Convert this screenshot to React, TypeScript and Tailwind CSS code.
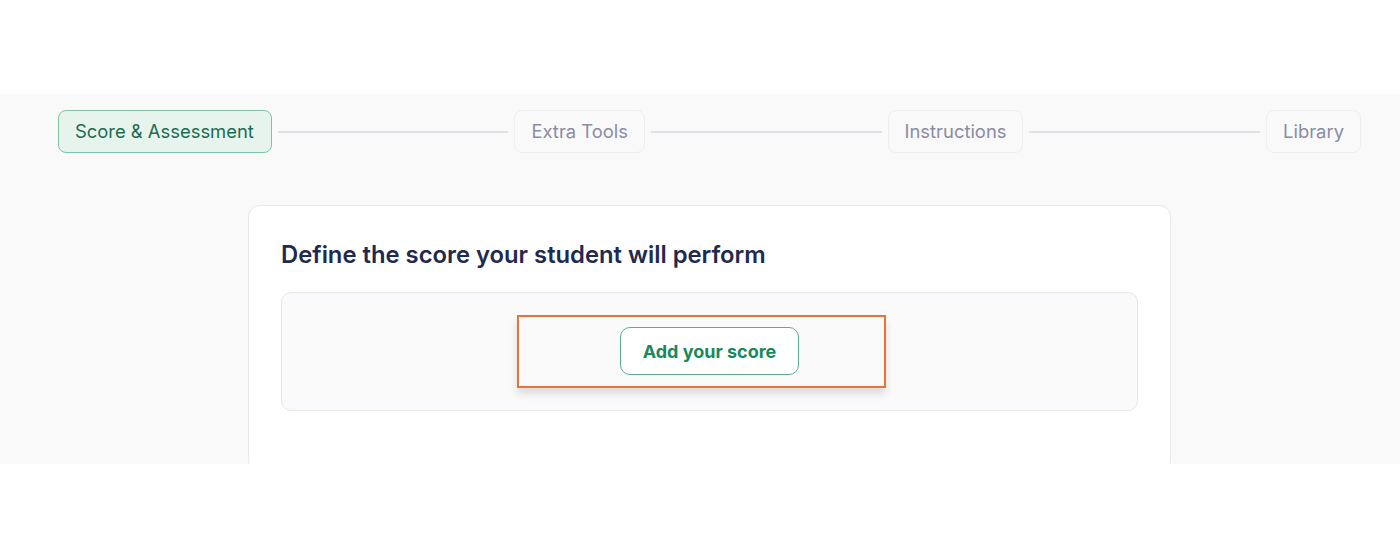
import React from 'react';

const steps = ['Score & Assessment', 'Extra Tools', 'Instructions', 'Library'];

function Stepper({ active }: { active: number }) {
  return (
    <div className="flex items-center">
      {steps.map((label, i) => (
        <React.Fragment key={label}>
          {i > 0 && <div className="mx-[6px] h-[2px] flex-1 bg-[#dfe0e8]" />}
          <div
            className={`flex h-[43px] items-center rounded-[8px] border px-[16px] text-[18.4px] ${
              i === active
                ? 'border-[#7fc3a5] bg-[#e7f4ee] text-[#1f6b50] pr-[17px]'
                : 'border-[#eeeef2] bg-[#f9f9fa] text-[#8a8ca3]'
            }`}
          >
            {label}
          </div>
        </React.Fragment>
      ))}
    </div>
  );
}

export default function App() {
  return (
    <div className="h-[560px] bg-white" style={{ fontFamily: 'Inter, "Noto Sans", sans-serif' }}>
      <div className="h-[94px]" />
      <div className="h-[370px] overflow-hidden bg-[#f9f9f9] pl-[58px] pr-[39px] pt-[16px]">
        <Stepper active={0} />
        <div className="mx-auto mt-[52px] w-[923px] rounded-[12px] border border-[#e8e8ee] bg-white px-[32px] pt-[34px] pb-[60px]">
          <h2 className="text-[23.8px] font-semibold leading-[30px] text-[#1f2a4e]">
            Define the score your student will perform
          </h2>
          <div className="mt-[22px] flex h-[119px] items-center justify-center rounded-[10px] border border-[#e6e6ee] bg-[#fafafa]">
            <div className="mr-[16px] border-2 border-[#e8733a] pt-[10px] pb-[11px] pl-[101px] pr-[85px] shadow-[0_6px_8px_rgba(0,0,0,0.12)]">
              <button className="flex h-[48px] items-center rounded-[10px] border border-[#5aae8a] bg-white px-[21.5px] text-[18px] font-bold text-[#178a5b]">
                Add your score
              </button>
            </div>
          </div>
        </div>
      </div>
    </div>
  );
}
